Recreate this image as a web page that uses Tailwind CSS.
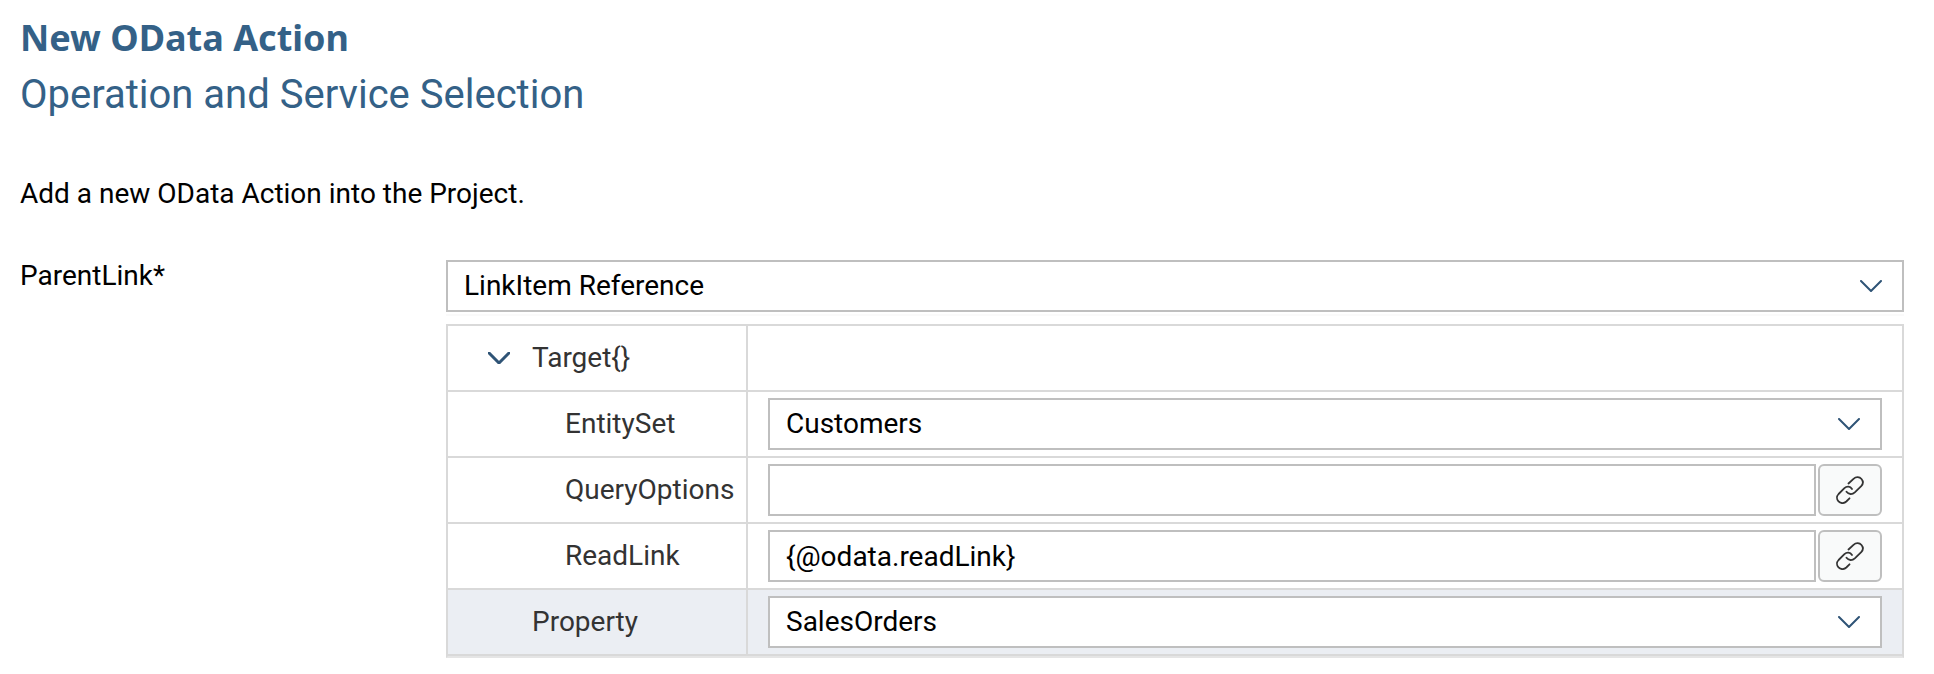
<!DOCTYPE html>
<html lang="en">
<head>
<meta charset="utf-8">
<title>New OData Action</title>
<script src="https://cdn.jsdelivr.net/npm/@tailwindcss/browser@4"></script>
</head>
<body class="bg-white font-[Roboto,sans-serif] text-[28px] leading-8 text-black">
<svg class="hidden" aria-hidden="true">
  <symbol id="chevron" viewBox="0 0 22 12"><path d="M1 1 L11 11 L21 1" fill="none" stroke="currentColor" stroke-linecap="round" stroke-linejoin="round"/></symbol>
  <symbol id="link" viewBox="0 0 28 28" fill="none" stroke="currentColor" stroke-width="1.8" stroke-linecap="round">
    <path d="M12.500 7.500 L17.500 2.800 C20 0.500 23.500 0.600 25.500 3 C27.300 5.200 27.200 8 25.200 10.200 L18.800 16.400 C16.200 18.800 12.500 18.500 10.500 15.800"/>
    <path d="M16 13 C14.200 10.200 10.800 10 8.400 12.200 L2.600 18 C0.500 20.200 0.500 23.300 2.500 25.400 C4.700 27.700 8 27.700 10.300 25.500 L13.500 22.300"/>
  </symbol>
</svg>
<main class="pl-5 pr-[30px] pt-4">
  <h1 class="font-['Noto_Sans',sans-serif] text-[36px] leading-[44px] font-bold text-[#346187]">New OData Action</h1>
  <h2 class="mt-3 text-[40px] leading-[46px] text-[#346187]">Operation and Service Selection</h2>
  <p class="mt-[60px]">Add a new OData Action into the Project.</p>

  <form class="mt-[50px] flex items-start">
    <label for="parent-link" class="w-[426px] shrink-0">ParentLink*</label>
    <div class="min-w-0 flex-1">
      <div class="relative">
        <select id="parent-link" class="block h-[52px] w-full appearance-none border-2 border-[#bfbfbf] bg-white pl-4 pr-14">
          <option>LinkItem Reference</option>
        </select>
        <svg class="pointer-events-none absolute right-[22px] top-5 h-3 w-[22px] text-[#2f5476] stroke-2"><use href="#chevron"/></svg>
      </div>
      <div class="mt-0.5 h-0.5 bg-[#fafafa]"></div>

      <table class="mt-2 w-full table-fixed border-separate border-spacing-0 border-2 border-[#d9d9d9] border-b-[#e5e5e5] text-[#333]">
        <colgroup><col class="w-[300px]"><col></colgroup>
        <tbody>
          <tr class="h-[66px]">
            <th scope="row" class="border-b-2 border-r-2 border-[#d9d9d9] p-0 pl-10 text-left font-normal">
              <button type="button" class="flex items-center gap-[22px]" aria-expanded="true">
                <svg class="h-3 w-[22px] text-[#2f5476] stroke-3 overflow-visible"><use href="#chevron"/></svg>
                Target{}
              </button>
            </th>
            <td class="border-b-2 border-[#d9d9d9] p-0"></td>
          </tr>
          <tr class="h-[66px]">
            <th scope="row" class="border-b-2 border-r-2 border-[#d9d9d9] p-0 pl-[117px] text-left font-normal"><label for="entity-set">EntitySet</label></th>
            <td class="border-b-2 border-[#d9d9d9] px-5 py-0">
              <div class="relative">
                <select id="entity-set" class="block h-[52px] w-full appearance-none border-2 border-[#bfbfbf] bg-white pl-4 pr-14 text-black">
                  <option>Customers</option>
                </select>
                <svg class="pointer-events-none absolute right-[22px] top-5 h-3 w-[22px] text-[#2f5476] stroke-2"><use href="#chevron"/></svg>
              </div>
            </td>
          </tr>
          <tr class="h-[66px]">
            <th scope="row" class="border-b-2 border-r-2 border-[#d9d9d9] p-0 pl-[117px] text-left font-normal"><label for="query-options">QueryOptions</label></th>
            <td class="border-b-2 border-[#d9d9d9] px-5 py-0">
              <div class="flex gap-0.5">
                <input id="query-options" type="text" class="h-[52px] min-w-0 flex-1 border-2 border-[#bfbfbf] bg-white px-4 text-black">
                <button type="button" aria-label="Bind QueryOptions" class="flex h-[52px] w-16 items-center justify-center rounded-md border-2 border-[#bfbfbf] bg-[#f9fafa]"><svg class="size-7"><use href="#link"/></svg></button>
              </div>
            </td>
          </tr>
          <tr class="h-[66px]">
            <th scope="row" class="border-b-2 border-r-2 border-[#d9d9d9] p-0 pl-[117px] text-left font-normal"><label for="read-link">ReadLink</label></th>
            <td class="border-b-2 border-[#d9d9d9] px-5 py-0">
              <div class="flex gap-0.5">
                <input id="read-link" type="text" value="{@odata.readLink}" class="h-[52px] min-w-0 flex-1 border-2 border-[#bfbfbf] bg-white px-4 text-black">
                <button type="button" aria-label="Bind ReadLink" class="flex h-[52px] w-16 items-center justify-center rounded-md border-2 border-[#bfbfbf] bg-[#f9fafa]"><svg class="size-7"><use href="#link"/></svg></button>
              </div>
            </td>
          </tr>
          <tr class="h-[66px] bg-[#ebeef3]">
            <th scope="row" class="border-b-2 border-r-2 border-[#d9d9d9] p-0 pl-[84px] text-left font-normal"><label for="property">Property</label></th>
            <td class="border-b-2 border-[#d9d9d9] px-5 py-0">
              <div class="relative">
                <select id="property" class="block h-[52px] w-full appearance-none border-2 border-[#bfbfbf] bg-white pl-4 pr-14 text-black">
                  <option>SalesOrders</option>
                </select>
                <svg class="pointer-events-none absolute right-[22px] top-5 h-3 w-[22px] text-[#2f5476] stroke-2"><use href="#chevron"/></svg>
              </div>
            </td>
          </tr>
        </tbody>
      </table>
    </div>
  </form>
</main>
</body>
</html>
